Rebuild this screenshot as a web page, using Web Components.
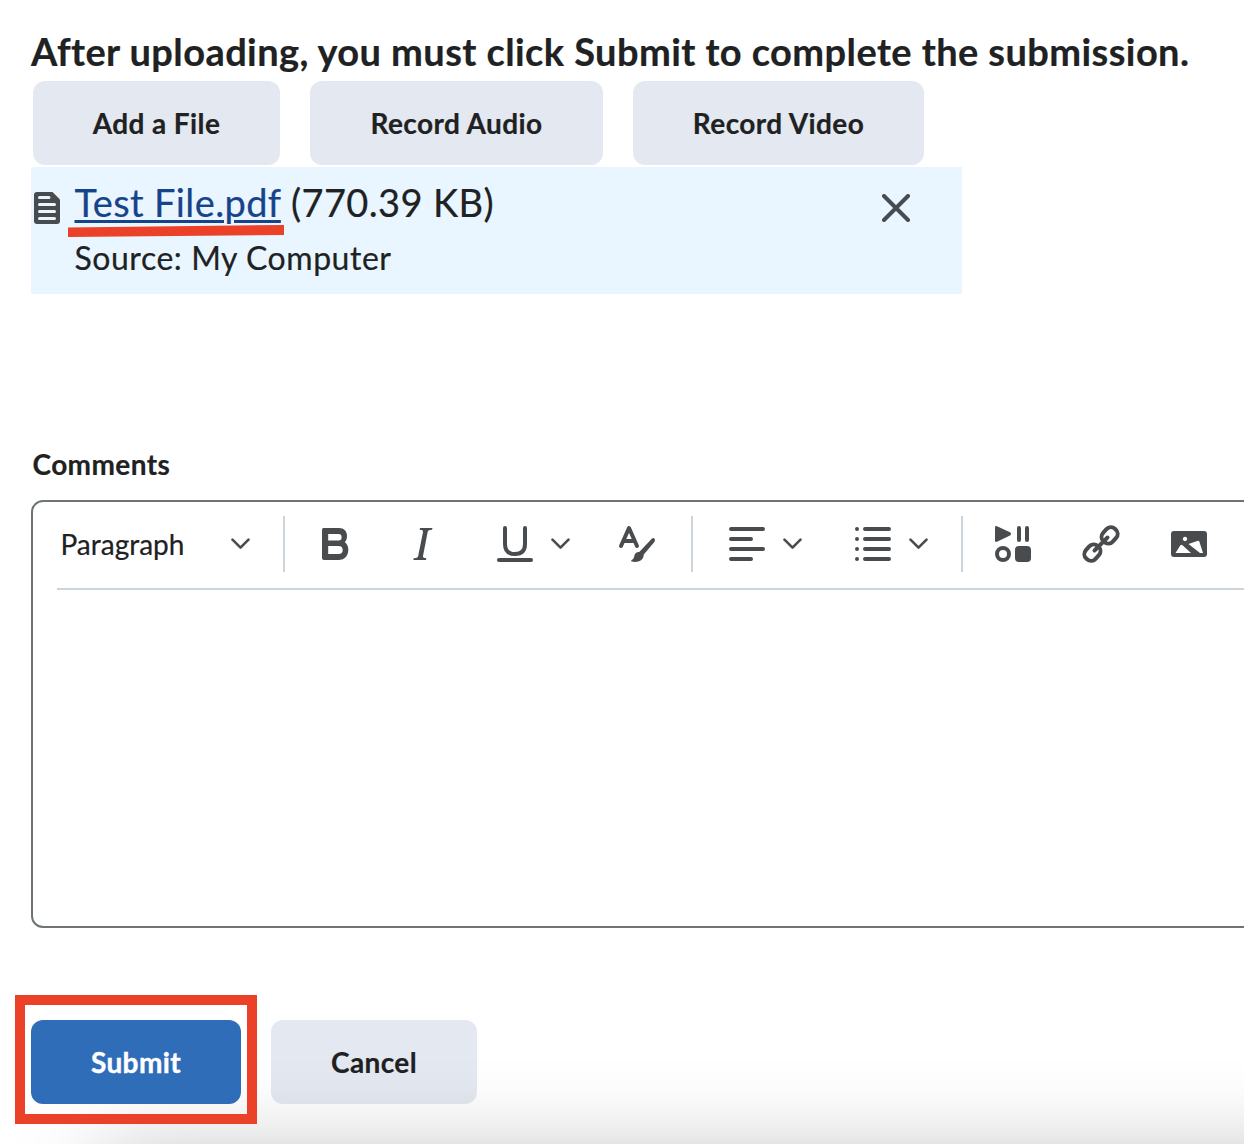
<!DOCTYPE html>
<html lang="en">
<head>
<meta charset="utf-8">
<title>Submit Assignment</title>
<style>
html,body{margin:0;background:#fff}
body{width:1244px;height:1144px;overflow:hidden;font-family:Lato,"Liberation Sans",sans-serif;color:#202122}
</style>
</head>
<body>
<submission-page></submission-page>
<script>
const define = (name, html) => customElements.define(name, class extends HTMLElement {
  constructor() {
    super();
    this.attachShadow({mode: 'open'}).innerHTML = html;
  }
});

define('action-button', `<style>
:host{display:flex;align-items:center;justify-content:center;height:84px;box-sizing:border-box;border-radius:12px;background:#e4e8f0;color:#202122;font-weight:700;font-size:28px;line-height:34px;letter-spacing:.4px;white-space:nowrap;-webkit-text-stroke:.2px currentColor}
:host([primary]){background:#2f6db9;color:#fff;-webkit-text-stroke:.4px #fff}
</style><slot></slot>`);

const ICONS = {
  bold: '<path fill-rule="evenodd" d="M6.500 2H22C27 2 30 5 30 10C30 12.600 29.200 14.800 27.800 16.200C30 17.800 31.300 20.300 31.300 23.600C31.300 30 28 34 21.500 34H7Q5 34 5 32V4Q5 2 6.500 2ZM11.200 8V14.500H21.500C23.800 14.500 24.600 13.400 24.600 11.200C24.600 9 23.600 8 21.500 8ZM11.200 20V28H21.500C24.400 28 25.700 26.700 25.700 24C25.700 21.300 24.400 20 21.500 20Z"/>',
  italic: '<path d="M15 2H27.500L27 3.800Q23.200 3.700 22.700 5.800L18 30Q17.500 32.100 21.400 32.200L21 34H8.300L8.700 32.200Q12.700 32.300 13.200 30L18 6Q18.300 3.700 14.600 3.800Z"/>',
  underline: '<path d="M8 2V18Q8 28 18 28T28 18V2" fill="none" stroke="currentColor" stroke-width="4" stroke-linecap="round"/><path d="M2 34H34" stroke="currentColor" stroke-width="4" stroke-linecap="round"/>',
  format: '<path d="M2 20L10 2L18 20M5.500 15H14.500" fill="none" stroke="currentColor" stroke-width="4" stroke-linecap="round" stroke-linejoin="round"/><path d="M33 12.500Q35.500 11 36 14Q36 15.300 34.500 17L24.800 28.500Q24.600 33.500 20 35.300Q16.500 36.500 12.500 35.500Q11.500 34.500 13 33.700Q14.700 33 15.200 30.500Q15.800 26 20.500 25.700Z"/>',
  align: '<path d="M2 3H34M2 13H22M2 23H34M2 33H22" fill="none" stroke="currentColor" stroke-width="4" stroke-linecap="round"/>',
  list: '<path d="M10 3H34M10 13H34M10 23H34M10 33H34M2 3H2.010M2 13H2.010M2 23H2.010M2 33H2.010" fill="none" stroke="currentColor" stroke-width="4" stroke-linecap="round"/>',
  stuff: '<path d="M0 1.500Q0 -.5 2 .3L15 6.300Q17 8 15 9.500L2 15.700Q0 16.500 0 14.500Z"/><path d="M24 2V14M32 2V14" stroke="currentColor" stroke-width="4" stroke-linecap="round"/><circle cx="8" cy="28" r="6" fill="none" stroke="currentColor" stroke-width="4"/><rect x="20" y="20" width="16" height="16" rx="4"/>',
  link: '<g fill="none" stroke="currentColor" stroke-width="4" stroke-linecap="round"><rect x="-8.500" y="-6.500" width="17" height="13" rx="6" transform="translate(26.600 9.400) rotate(-48)"/><rect x="-8.500" y="-6.500" width="17" height="13" rx="6" transform="translate(9.400 26.600) rotate(-48)"/><path d="M11.500 24.500L24.500 11.500"/></g>',
  image: '<path fill-rule="evenodd" d="M3 5H33Q36 5 36 8V28Q36 31 33 31H3Q0 31 0 28V8Q0 5 3 5ZM4.500 27H20L11.500 19.200Q10.300 18.300 9.200 19.500ZM17.500 18L29 27H32L28.300 15.500Q27.500 14.300 26.300 15ZM14 10.800A2.200 2.200 0 1 0 14.010 10.800Z"/>',
};
customElements.define('tool-icon', class extends HTMLElement {
  constructor() {
    super();
    this.attachShadow({mode: 'open'}).innerHTML = `<style>:host{display:block;width:36px;height:36px;flex:none;color:#494c4e}svg{display:block;overflow:visible}</style><svg width="36" height="36" viewBox="0 0 36 36" fill="currentColor">${ICONS[this.getAttribute('name')]}</svg>`;
  }
});

define('chevron-icon', `<style>:host{display:block;flex:none;width:20px;height:12px;color:#494c4e;margin-bottom:1px}svg{display:block}</style>
<svg width="20" height="12" viewBox="0 0 20 12"><path d="M1.500 1.700L9.500 9.700L17.500 1.700" fill="none" stroke="currentColor" stroke-width="2.600" stroke-linecap="round" stroke-linejoin="round"/></svg>`);

define('tool-divider', `<style>:host{display:block;flex:none;width:2px;height:56px;background:#cdd5dc}</style>`);

define('comment-editor', `<style>
:host{display:block;box-sizing:border-box;width:1300px;height:428px;border:2px solid #6e7376;border-radius:12px;background:#fff}
.bar{display:flex;align-items:center;height:84px;padding-bottom:2px;margin-left:24px;border-bottom:2px solid #cdd5dc;box-sizing:content-box}
.para{width:170.500px;margin-left:3.500px;font-size:28px;line-height:34px;padding-bottom:1px;-webkit-text-stroke:.2px currentColor}
</style>
<div class="bar">
<span class="para">Paragraph</span><chevron-icon></chevron-icon>
<tool-divider style="margin-left:32px"></tool-divider>
<tool-icon name="bold" style="margin-left:32px"></tool-icon>
<tool-icon name="italic" style="margin-left:52px"></tool-icon>
<tool-icon name="underline" style="margin-left:56px"></tool-icon>
<chevron-icon style="margin-left:18px"></chevron-icon>
<tool-icon name="format" style="margin-left:48px"></tool-icon>
<tool-divider style="margin-left:36px"></tool-divider>
<tool-icon name="align" style="margin-left:36px"></tool-icon>
<chevron-icon style="margin-left:18px"></chevron-icon>
<tool-icon name="list" style="margin-left:52px"></tool-icon>
<chevron-icon style="margin-left:18px"></chevron-icon>
<tool-divider style="margin-left:32px"></tool-divider>
<tool-icon name="stuff" style="margin-left:32px"></tool-icon>
<tool-icon name="link" style="margin-left:52px"></tool-icon>
<tool-icon name="image" style="margin-left:52px"></tool-icon>
</div>`);

define('file-row', `<style>
:host{display:flex;box-sizing:border-box;width:931px;height:127px;background:#e9f6ff;position:relative}
.doc{display:block;margin:25px 0 0 3px;flex:none}
.info{margin-left:14.500px;flex:1;padding-top:11px;white-space:nowrap;-webkit-text-stroke:.2px currentColor}
.name{font-size:38px;line-height:48px;letter-spacing:.38px}
a{color:#17438a;text-decoration:underline;text-decoration-thickness:3px;text-underline-offset:3px}
.source{font-size:32px;line-height:40px;margin-top:12px;letter-spacing:.54px}
.close{display:block;margin:27px 52px 0 0}
.mark{position:absolute;left:37px;top:58px}
</style>
<svg class="doc" width="26" height="32" viewBox="0 0 26 32"><path d="M3 0H18.500L26 7.500V29Q26 32 23 32H3Q0 32 0 29V3Q0 0 3 0Z" fill="#494c4e"/><path d="M5.500 5.500H15M5.500 12.500H20.500M5.500 19.500H20.500M5.500 26.500H20.500" stroke="#e9f6ff" stroke-width="3" stroke-linecap="round"/></svg>
<div class="info"><div class="name"><a><slot name="file"></slot></a> <slot name="size"></slot></div><div class="source"><slot name="source"></slot></div></div>
<svg class="close" width="28" height="28" viewBox="0 0 28 28"><path d="M2 2L26 26M26 2L2 26" stroke="#494c4e" stroke-width="4" stroke-linecap="round"/></svg>
<svg class="mark" width="216" height="12" viewBox="0 0 216 12"><path d="M0 2.500L216 0V10L0 12Z" fill="#eb4128"/></svg>`);

define('dock-shadow', `<style>:host{position:absolute;left:100px;top:1156px;width:1400px;height:200px;box-shadow:0 0 92px rgba(0,0,0,.26);pointer-events:none}</style>`);

define('submission-page', `<style>
:host{display:block;position:relative;width:1244px;height:1144px;overflow:hidden;padding:26px 0 0 31px;box-sizing:border-box}
h2{margin:0;font-size:38px;line-height:50px;height:55px;font-weight:700;letter-spacing:.41px;white-space:nowrap;-webkit-text-stroke:.2px currentColor}
.actions{display:flex;gap:30px;margin-left:2px;margin-bottom:2px}
.label{font-weight:700;font-size:28px;line-height:34px;letter-spacing:.4px;margin:153px 0 19px 1.500px;-webkit-text-stroke:.2px currentColor}
.foot{display:flex;gap:14px;align-items:flex-start;margin:67px 0 0 -16px}
.outline{border:10px solid #eb4128;width:242px;height:129px;box-sizing:border-box;padding:15px 6px;position:relative;z-index:1}
.foot>action-button{width:206px;margin-top:25px}
</style>
<h2>After uploading, you must click Submit to complete the submission.</h2>
<div class="actions"><action-button style="width:247px">Add a File</action-button><action-button style="width:293px">Record Audio</action-button><action-button style="width:291px">Record Video</action-button></div>
<file-row><span slot="file">Test File.pdf</span><span slot="size">(770.39 KB)</span><span slot="source">Source: My Computer</span></file-row>
<div class="label">Comments</div>
<comment-editor></comment-editor>
<div class="foot"><div class="outline"><action-button primary>Submit</action-button></div><action-button>Cancel</action-button></div>
<dock-shadow></dock-shadow>`);
</script>
</body>
</html>
